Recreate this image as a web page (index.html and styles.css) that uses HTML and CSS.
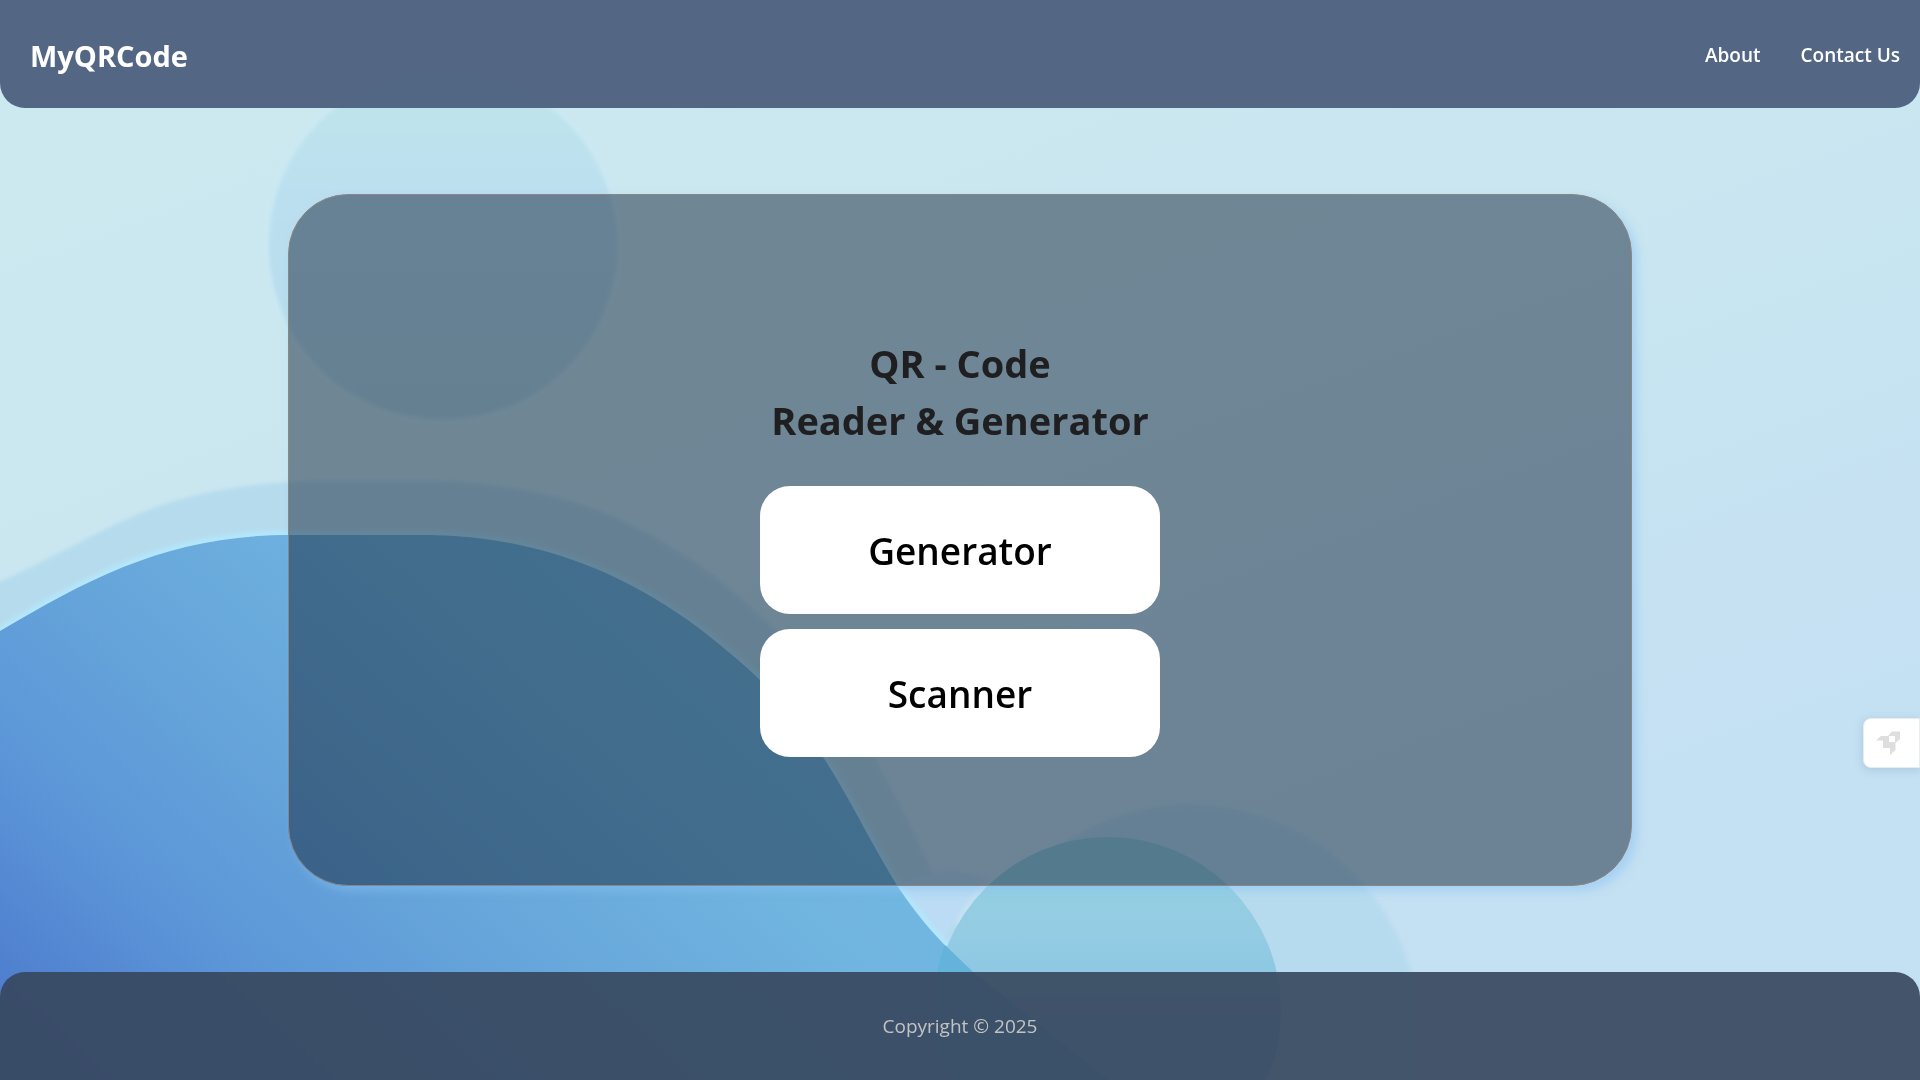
FILE: index.html
```html
<!DOCTYPE html>
<html lang="en">
<head>
  <meta charset="utf-8">
  <meta name="viewport" content="width=device-width, initial-scale=1">
  <title>MyQRCode</title>
  <link rel="stylesheet" href="styles.css">
</head>
<body>
  <svg class="backdrop" viewBox="0 0 1920 1080" preserveAspectRatio="none" aria-hidden="true">
    <defs>
      <linearGradient id="sky" gradientUnits="userSpaceOnUse" x1="500" y1="0" x2="900" y2="1080">
        <stop offset="0" stop-color="#cce9f0"/>
        <stop offset="0.5" stop-color="#c9e6f1"/>
        <stop offset="1" stop-color="#c4e0f3"/>
      </linearGradient>
      <linearGradient id="hill" gradientUnits="userSpaceOnUse" x1="0" y1="1000" x2="500" y2="450">
        <stop offset="0" stop-color="#4e7dce"/>
        <stop offset="0.25" stop-color="#5c96d8"/>
        <stop offset="0.5" stop-color="#66a5da"/>
        <stop offset="0.8" stop-color="#70b4e0"/>
        <stop offset="1" stop-color="#72b8e0"/>
      </linearGradient>
      <linearGradient id="bubble" x1="0" y1="0" x2="0" y2="1">
        <stop offset="0" stop-color="#c0e5e9"/>
        <stop offset="0.4" stop-color="#bbdff0"/>
        <stop offset="1" stop-color="#b5dbe8"/>
      </linearGradient>
      <linearGradient id="pool" x1="0" y1="0" x2="0" y2="1">
        <stop offset="0" stop-color="#92cfe0"/>
        <stop offset="0.25" stop-color="#94cde3"/>
        <stop offset="0.5" stop-color="#8ac3e2"/>
        <stop offset="1" stop-color="#7ab2dc"/>
      </linearGradient>
      <filter id="soft"><feGaussianBlur stdDeviation="2"/></filter>
    </defs>
    <rect width="1920" height="1080" fill="url(#sky)"/>
    <g filter="url(#soft)">
      <circle cx="443" cy="245" r="176" fill="url(#bubble)" stroke="#cceaf5" stroke-width="3"/>
      <path d="M-10 586C60 556 110 522 167 503C220 487 270 481 330 481H430C500 482 580 497 640 530C720 572 800 640 870 750C905 810 935 880 970 950L900 1090H-10Z" fill="#b6dbed"/>
      <circle cx="1190" cy="1035" r="230" fill="#b7dbee"/>
      <path d="M893 884C915 915 930 930 945 942C955 915 975 890 990 880L950 870Z" fill="#bbdcf4"/>
    </g>
    <path d="M-10 637C90 577 170 535 290 535H430C530 536 620 569 700 629C755 672 793 708 823 757C850 798 870 842 898 887C922 923 946 948 973 972L1108 1080L1120 1100H-10Z" fill="none" stroke="#b4e6fc" stroke-width="9" filter="url(#soft)"/>
    <path d="M-10 637C90 577 170 535 290 535H430C530 536 620 569 700 629C755 672 793 708 823 757C850 798 870 842 898 887C922 923 946 948 973 972L1108 1080V1090H-10Z" fill="url(#hill)"/>
    <circle cx="1108" cy="1010" r="173" fill="url(#pool)"/>
    <path d="M945 945L973 972L1108 1080H950C930 1040 930 980 945 945Z" fill="#64b3da"/>
  </svg>

  <header class="topbar">
    <a class="brand" href="#">MyQRCode</a>
    <nav class="menu">
      <a href="#about">About</a>
      <a href="#contact">Contact Us</a>
    </nav>
  </header>

  <main class="content">
    <section class="card">
      <h1 class="title">QR - Code<br>Reader &amp; Generator</h1>
      <div class="actions">
        <button class="action" type="button">Generator</button>
        <button class="action" type="button">Scanner</button>
      </div>
    </section>
  </main>

  <footer class="footer">
    <p>Copyright © 2025</p>
  </footer>

  <button class="launcher" type="button" aria-label="Launch">
    <svg width="24" height="24" viewBox="0 0 24 24" aria-hidden="true">
      <path fill="#dedede" fill-rule="evenodd" d="M0 9.500L5 5H12L16 0.500H24V8L19.500 12V19L14 24V17H7V9.500ZM13 5V11H19V5Z"/>
    </svg>
  </button>
</body>
</html>
```
FILE: styles.css
```css
* {
  box-sizing: border-box;
}

body {
  margin: 0;
  min-height: 100vh;
  display: grid;
  grid-template-rows: 10vh 1fr 10vh;
  font-family: "Segoe UI", "Open Sans", "Noto Sans", sans-serif;
}

.backdrop {
  position: fixed;
  inset: 0;
  z-index: -1;
  width: 100%;
  height: 100%;
}

.topbar {
  display: flex;
  align-items: center;
  justify-content: space-between;
  padding: 2px 20px 0 30px;
  border-radius: 0 0 25px 25px;
  background: rgba(70, 89, 121, 0.9);
}

.brand,
.menu a {
  color: #fff;
  font-weight: 600;
  text-decoration: none;
}

.brand {
  font-size: 29px;
  font-weight: 700;
}

.menu {
  display: flex;
  gap: 40px;
  font-size: 19px;
}

.content {
  display: flex;
  align-items: center;
  justify-content: center;
}

.card {
  display: flex;
  flex-direction: column;
  align-items: center;
  justify-content: center;
  width: 70%;
  min-height: 80%;
  padding-top: 12px;
  border: 1px solid #8b8686;
  border-radius: 60px;
  background: rgba(20, 38, 58, 0.5);
  box-shadow: 5px 5px 10px rgba(135, 195, 245, 0.5);
}

.title {
  margin: 0 0 37px;
  color: #1f1f21;
  font-size: 38px;
  font-weight: 700;
  line-height: 57px;
  text-align: center;
}

.actions {
  display: flex;
  flex-direction: column;
  gap: 15px;
}

.action {
  width: 400px;
  height: 128px;
  border: 0;
  border-radius: 30px;
  background: #fff;
  color: #000;
  font: inherit;
  font-size: 37px;
  font-weight: 600;
}

.footer {
  display: flex;
  align-items: center;
  justify-content: center;
  border-radius: 25px 25px 0 0;
  background: rgba(54, 70, 92, 0.9);
  color: #c3c3c3;
  font-size: 19px;
}

.footer p {
  margin: 0;
}

.launcher {
  position: fixed;
  top: 718px;
  right: 0;
  display: flex;
  align-items: center;
  width: 57px;
  height: 50px;
  padding: 0 12px;
  border: 1px solid #e6edf2;
  border-radius: 8px 0 0 8px;
  background: #fff;
  box-shadow: 0 2px 8px rgba(90, 130, 160, 0.25);
}
```
